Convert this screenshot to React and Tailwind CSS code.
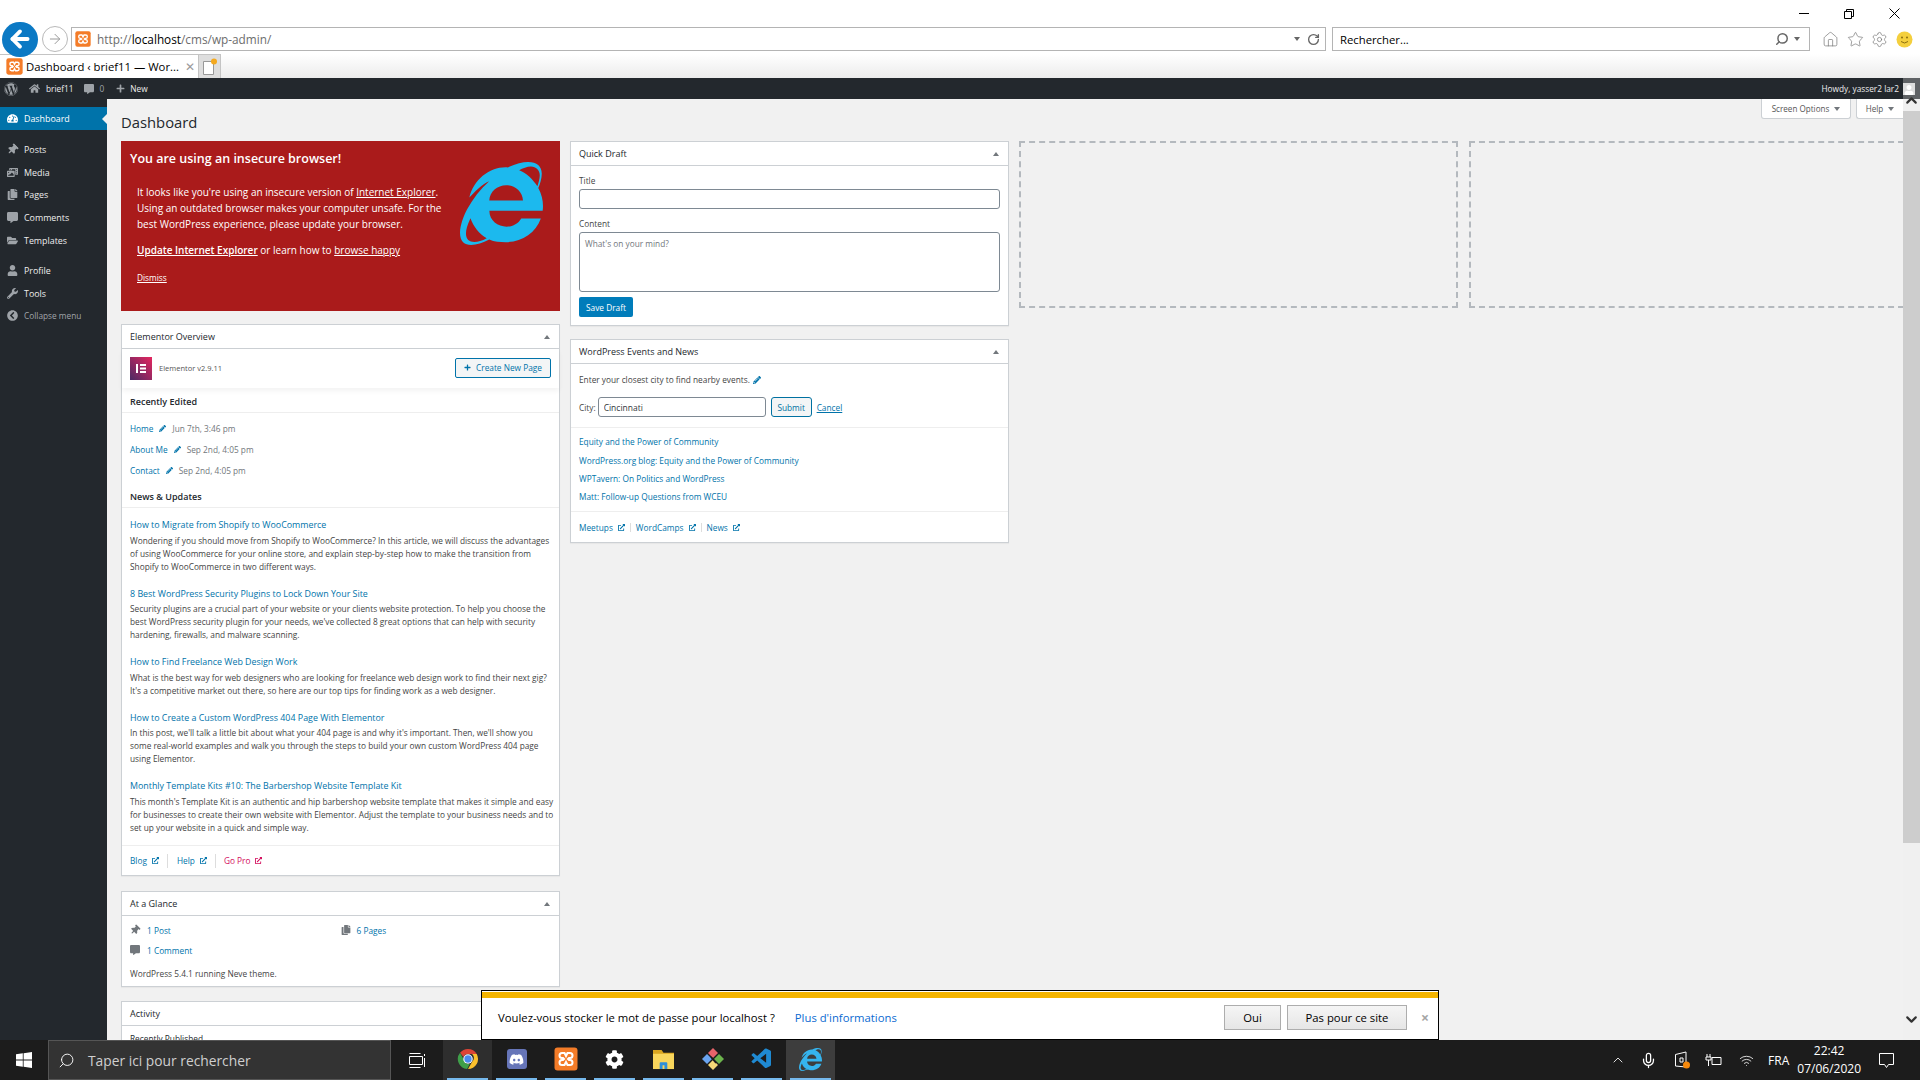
import {
  ArrowLeft,
  ArrowRight,
  ChevronDown,
  ChevronUp,
  Home,
  Mic,
  RotateCw,
  Search,
  Settings,
  Star,
  Wifi,
} from "lucide-react";
import {
  FaChevronCircleLeft,
  FaCog,
  FaCommentAlt,
  FaCopy,
  FaDiscord,
  FaExternalLinkAlt,
  FaFolderOpen,
  FaHome,
  FaInternetExplorer,
  FaPencilAlt,
  FaPhotoVideo,
  FaPlus,
  FaTachometerAlt,
  FaThumbtack,
  FaUser,
  FaWordpress,
  FaWrench,
} from "react-icons/fa";
import { VscVscode } from "react-icons/vsc";

const Xampp = ({ size = 16 }) => (
  <svg width={size} height={size} viewBox="0 0 24 24" className="shrink-0">
    <rect x="0.5" y="0.5" width="23" height="23" rx="3" fill="#f47c28" />
    <path
      d="M8 6h2.5L12 9l1.500-3H16a2.500 2.500 0 0 1 0 5h-1l-1 1 1 1h1a2.500 2.500 0 0 1 0 5h-2.500L12 15l-1.500 3H8a2.500 2.500 0 0 1 0-5h1l1-1-1-1H8a2.500 2.500 0 0 1 0-5z"
      fill="none"
      stroke="#fff"
      strokeWidth="2"
    />
  </svg>
);

const ChromeIcon = () => (
  <svg width="22" height="22" viewBox="0 0 24 24">
    <path d="M12 1a11 11 0 0 1 9.500 5.500H12a5.500 5.500 0 0 0-5 3.200L3.300 5.200A11 11 0 0 1 12 1z" fill="#db4437" />
    <path d="M21.500 6.500A11 11 0 0 1 12 23l4.700-8.200A5.500 5.500 0 0 0 16.500 6.500z" fill="#fbc02d" />
    <path d="M3.300 5.200 8 13.500a5.500 5.500 0 0 0 6 3.800L11 23A11 11 0 0 1 3.300 5.200z" fill="#3f9f4a" />
    <circle cx="12" cy="12" r="5.200" fill="#fff" />
    <circle cx="12" cy="12" r="4" fill="#4a8bf0" />
  </svg>
);

const FolderIcon = () => (
  <svg width="23" height="21" viewBox="0 0 24 22">
    <path d="M1 1h9l2 3h11v4H1z" fill="#d9a520" />
    <rect x="1" y="5" width="22" height="16" fill="#f9d65c" />
    <path d="M8 21v-6a1 1 0 0 1 1-1h6a1 1 0 0 1 1 1v6h-3v-4h-2v4z" fill="#2f8fd8" />
  </svg>
);

const GitIcon = () => (
  <svg width="24" height="24" viewBox="0 0 24 24">
    <path d="M12 1l5 5-5 5-5-5z" fill="#e8646a" />
    <path d="M18 7l5 5-5 5-5-5z" fill="#6cb44c" />
    <path d="M12 13l5 5-5 5-5-5z" fill="#f5d978" />
    <path d="M6 7l5 5-5 5-5-5z" fill="#6aa5f0" />
    <path d="M10 10l5 6" stroke="#1b1b1b" strokeWidth="1.500" />
  </svg>
);

const ElementorLogo = () => (
  <svg width="22" height="23" viewBox="0 0 22 23">
    <defs>
      <linearGradient id="elementor" x1="1" y1="0" x2="0" y2="1">
        <stop offset="0" stopColor="#e5265f" />
        <stop offset="1" stopColor="#4a2a64" />
      </linearGradient>
    </defs>
    <rect width="22" height="23" fill="url(#elementor)" />
    <rect x="6" y="7" width="2" height="9" fill="#fff" />
    <rect x="10" y="7" width="6" height="2" fill="#fff" />
    <rect x="10" y="10.500" width="6" height="2" fill="#fff" />
    <rect x="10" y="14" width="6" height="2" fill="#fff" />
  </svg>
);

const Panel = ({ title, children, className = "" }) => (
  <section className={`border border-[#ccd0d4] bg-white shadow-[0_1px_1px_rgba(0,0,0,0.04)] ${className}`}>
    <header className="flex h-[24px] items-center justify-between border-b border-[#ccd0d4] pl-[8px] pr-[9px]">
      <h2 className="text-[9px] font-medium text-[#23282d]">{title}</h2>
      <span className="h-0 w-0 border-x-[3px] border-b-[4px] border-x-transparent border-b-[#72777c]" />
    </header>
    {children}
  </section>
);

const External = ({ className = "text-[#0073aa]" }) => (
  <FaExternalLinkAlt size={7} className={`ml-[5px] ${className}`} />
);

const menu = [
  { label: "Posts", icon: FaThumbtack, tilt: true },
  { label: "Media", icon: FaPhotoVideo },
  { label: "Pages", icon: FaCopy },
  { label: "Comments", icon: FaCommentAlt },
  { label: "Templates", icon: FaFolderOpen },
];

const news = [
  {
    title: "How to Migrate from Shopify to WooCommerce",
    lines: [
      "Wondering if you should move from Shopify to WooCommerce? In this article, we will discuss the advantages",
      "of using WooCommerce for your online store, and explain step-by-step how to make the transition from",
      "Shopify to WooCommerce in two different ways.",
    ],
  },
  {
    title: "8 Best WordPress Security Plugins to Lock Down Your Site",
    lines: [
      "Security plugins are a crucial part of your website or your clients website protection. To help you choose the",
      "best WordPress security plugin for your needs, we've collected 8 great options that can help with security",
      "hardening, firewalls, and malware scanning.",
    ],
  },
  {
    title: "How to Find Freelance Web Design Work",
    lines: [
      "What is the best way for web designers who are looking for freelance web design work to find their next gig?",
      "It's a competitive market out there, so here are our top tips for finding work as a web designer.",
    ],
  },
  {
    title: "How to Create a Custom WordPress 404 Page With Elementor",
    lines: [
      "In this post, we'll talk a little bit about what your 404 page is and why it's important. Then, we'll show you",
      "some real-world examples and walk you through the steps to build your own custom WordPress 404 page",
      "using Elementor.",
    ],
  },
  {
    title: "Monthly Template Kits #10: The Barbershop Website Template Kit",
    lines: [
      "This month's Template Kit is an authentic and hip barbershop website template that makes it simple and easy",
      "for businesses to create their own website with Elementor. Adjust the template to your business needs and to",
      "set up your website in a quick and simple way.",
    ],
  },
];

const recent = [
  { name: "Home", date: "Jun 7th, 3:46 pm" },
  { name: "About Me", date: "Sep 2nd, 4:05 pm" },
  { name: "Contact", date: "Sep 2nd, 4:05 pm" },
];

const BrowserChrome = () => (
  <div className="h-[78px] shrink-0 bg-white">
    {/* window buttons */}
    <div className="flex h-[27px] items-center justify-end gap-[35px] pr-[20px]">
      <span className="h-px w-[10px] bg-black" />
      <svg width="10" height="10" viewBox="0 0 10 10" fill="none" stroke="#000">
        <path d="M.5 2.500h7v7h-7zM2.500 2.500v-2h7v7h-2" />
      </svg>
      <svg width="11" height="11" viewBox="0 0 11 11" stroke="#000">
        <path d="M.5.500l10 10M10.500.500l-10 10" />
      </svg>
    </div>

    {/* address row */}
    <div className="flex h-[24px] items-center pl-[2px]">
      <div className="z-10 flex h-[35px] w-[36px] shrink-0 items-center justify-center rounded-full bg-[#0b79c4]">
        <ArrowLeft size={26} strokeWidth={3.5} className="text-white" />
      </div>
      <div className="ml-[4px] flex h-[26px] w-[26px] shrink-0 items-center justify-center rounded-full border border-[#b9b9b9]">
        <ArrowRight size={16} strokeWidth={1.5} className="text-[#9a9a9a]" />
      </div>
      <div className="ml-[3px] flex h-[24px] w-[1255px] shrink-0 items-center border border-[#b4b4b4] pl-[3px] pr-[5px]">
        <Xampp size={16} />
        <span className="ml-[6px] text-[11.800px] text-[#6d6d6d]">
          http://<span className="text-black">localhost</span>/cms/wp-admin/
        </span>
        <span className="ml-auto h-0 w-0 border-x-[3.500px] border-t-[4px] border-x-transparent border-t-[#666]" />
        <RotateCw size={13} strokeWidth={2.5} className="ml-[7px] text-[#666]" />
      </div>
      <div className="ml-[6px] flex h-[24px] w-[478px] shrink-0 items-center border border-[#b4b4b4] pl-[7px] pr-[9px]">
        <span className="text-[11.300px] text-black">Rechercher...</span>
        <Search size={14} strokeWidth={2.500} className="ml-auto -scale-x-100 text-[#666]" />
        <span className="ml-[5px] h-0 w-0 border-x-[3.500px] border-t-[4px] border-x-transparent border-t-[#666]" />
      </div>
      <div className="ml-[12px] flex items-center gap-[7.500px]">
        <Home size={17} strokeWidth={1} className="text-[#777]" />
        <Star size={17} strokeWidth={1} className="text-[#777]" />
        <Settings size={17} strokeWidth={1} className="text-[#777]" />
        <svg width="17" height="17" viewBox="0 0 17 17">
          <circle cx="8.500" cy="8.500" r="8" fill="#f4cf3d" />
          <circle cx="6" cy="6.500" r="1" fill="#8a6d10" />
          <circle cx="11" cy="6.500" r="1" fill="#8a6d10" />
          <path d="M5 10.500q3.500 3 7 0" fill="none" stroke="#8a6d10" />
        </svg>
      </div>
    </div>

    {/* tab row */}
    <div className="mt-[3px] flex h-[24px] bg-gradient-to-b from-white to-[#ececec]">
      <div className="flex w-[199px] shrink-0 items-center border-r border-t border-[#c4c4c4] bg-white pl-[6px]">
        <Xampp size={17} />
        <span className="ml-[3px] whitespace-nowrap text-[11.300px] text-black">Dashboard ‹ brief11 — Wor...</span>
        <span className="ml-[6px] text-[12px] leading-none text-[#9a9a9a]">✕</span>
      </div>
      <div className="flex w-[22px] shrink-0 items-center justify-center border-r border-t border-[#c4c4c4] bg-[#dedede]">
        <svg width="15" height="17" viewBox="0 0 15 17">
          <path d="M1.500 3.500h10v13h-10z" fill="#fff" stroke="#999" />
          <circle cx="12" cy="3.500" r="3" fill="#f4a91f" />
        </svg>
      </div>
    </div>
  </div>
);

const AdminBar = () => (
  <div className="flex h-[21px] items-center bg-[#23282d] text-[8.300px] text-[#eee]">
    <FaWordpress size={14} className="ml-[4px] text-[#9ea3a8]" />
    <FaHome size={11} className="ml-[11px] text-[#9ea3a8]" />
    <span className="ml-[6px]">brief11</span>
    <FaCommentAlt size={10} className="ml-[10px] text-[#9ea3a8]" />
    <span className="ml-[6px] text-[#9ea3a8]">0</span>
    <FaPlus size={9} className="ml-[12px] text-[#9ea3a8]" />
    <span className="ml-[5px]">New</span>
    <span className="ml-auto pr-[4px] text-[#eee]">Howdy, yasser2 lar2</span>
  </div>
);

const Sidebar = () => (
  <nav className="w-[107px] shrink-0 bg-[#23282d] pt-[8px] text-[8.900px] text-[#eee]">
    <div className="flex h-[23px] items-center bg-[#0073aa] pl-[7px] text-white">
      <FaTachometerAlt size={11} />
      <span className="ml-[6px]">Dashboard</span>
      <span className="ml-auto h-0 w-0 border-y-[5px] border-r-[5px] border-y-transparent border-r-[#f1f1f1]" />
    </div>
    <div className="mt-[8px]">
      {menu.map(({ label, icon: Icon, tilt }) => (
        <div key={label} className="flex h-[22.800px] items-center pl-[7px]">
          <Icon size={11} className={tilt ? "rotate-45 text-[#9ea3a8]" : "text-[#9ea3a8]"} />
          <span className="ml-[6px]">{label}</span>
        </div>
      ))}
    </div>
    <div className="mt-[7px]">
      <div className="flex h-[22.800px] items-center pl-[7px]">
        <FaUser size={11} className="text-[#9ea3a8]" />
        <span className="ml-[6px]">Profile</span>
      </div>
      <div className="flex h-[22.800px] items-center pl-[7px]">
        <FaWrench size={11} className="text-[#9ea3a8]" />
        <span className="ml-[6px]">Tools</span>
      </div>
      <div className="flex h-[22.800px] items-center pl-[7px] text-[8.300px] text-[#a0a5aa]">
        <FaChevronCircleLeft size={11} className="text-[#9ea3a8]" />
        <span className="ml-[6px]">Collapse menu</span>
      </div>
    </div>
  </nav>
);

const InsecureBrowser = () => (
  <div className="mb-[13px] flex h-[170px] bg-[#aa1b1b] text-white">
    <div className="flex-1">
      <h3 className="mt-[10px] pl-[9px] text-[12.500px] font-semibold leading-[15px]">You are using an insecure browser!</h3>
      <div className="mt-[18px] pl-[16px] text-[10px] leading-[16px]">
        <p>
          It looks like you're using an insecure version of <u>Internet Explorer</u>.
        </p>
        <p>Using an outdated browser makes your computer unsafe. For the</p>
        <p>best WordPress experience, please update your browser.</p>
        <p className="mt-[10px]">
          <u className="font-semibold">Update Internet Explorer</u> or learn how to <u>browse happy</u>
        </p>
        <p className="mt-[12px] text-[8.300px]">
          <u>Dismiss</u>
        </p>
      </div>
    </div>
    <FaInternetExplorer size={83} className="mr-[17px] mt-[21px] shrink-0 text-[#1cb9ee]" />
  </div>
);

const ElementorOverview = () => (
  <Panel title="Elementor Overview" className="mb-[15px]">
    <div className="flex h-[39px] items-center px-[8px] shadow-[0_3px_5px_rgba(0,0,0,0.05)]">
      <ElementorLogo />
      <span className="ml-[7px] text-[7.500px] text-[#555]">Elementor v2.9.11</span>
      <button className="mb-[2px] ml-auto flex h-[20px] w-[96px] items-center justify-center rounded-[2px] border border-[#0073aa] bg-[#f3f5f6] text-[8.300px] text-[#0073aa]">
        <FaPlus size={7} className="mr-[5px]" />
        Create New Page
      </button>
    </div>
    <h3 className="flex h-[25px] items-end border-b border-[#eee] px-[8px] pb-[4px] text-[9px] font-semibold text-[#23282d]">Recently Edited</h3>
    <div className="px-[8px] pt-[5px]">
      {recent.map((item) => (
        <div key={item.name} className="flex h-[21px] items-center text-[#72777c]">
          <span className="text-[#0073aa]">{item.name}</span>
          <FaPencilAlt size={7} className="mx-[6px] text-[#0073aa]" />
          <span>{item.date}</span>
        </div>
      ))}
    </div>
    <h3 className="flex h-[27px] items-end border-b border-[#eee] px-[8px] pb-[4px] text-[9px] font-semibold text-[#23282d]">News &amp; Updates</h3>
    <div className="flex flex-col gap-[14px] whitespace-nowrap px-[8px] pb-[11.500px] pt-[10px]">
      {news.map((post) => (
        <article key={post.title}>
          <div className="text-[8.900px] text-[#0073aa]">{post.title}</div>
          <div className="mt-[2.500px] text-[#444]">
            {post.lines.map((line) => (
              <div key={line}>{line}</div>
            ))}
          </div>
        </article>
      ))}
    </div>
    <div className="flex h-[30px] items-center border-t border-[#eee] px-[8px] text-[#0073aa]">
      <span>Blog</span>
      <External />
      <span className="mx-[8.500px] h-[14px] w-px bg-[#ddd]" />
      <span>Help</span>
      <External />
      <span className="mx-[8px] h-[14px] w-px bg-[#ddd]" />
      <span className="text-[#d30c5c]">Go Pro</span>
      <External className="text-[#d30c5c]" />
    </div>
  </Panel>
);

const AtAGlance = () => (
  <Panel title="At a Glance" className="mb-[14px]">
    <div className="px-[8px] pb-[6px] pt-[4px] text-[#0073aa]">
      <div className="grid h-[20px] grid-cols-2 items-center">
        <div className="flex items-center">
          <FaThumbtack size={10} className="rotate-45 text-[#72777c]" />
          <span className="ml-[7px]">1 Post</span>
        </div>
        <div className="flex items-center">
          <FaCopy size={10} className="text-[#72777c]" />
          <span className="ml-[6px]">6 Pages</span>
        </div>
      </div>
      <div className="flex h-[20px] items-center">
        <FaCommentAlt size={10} className="text-[#72777c]" />
        <span className="ml-[7px]">1 Comment</span>
      </div>
      <p className="mt-[7px] text-[#444]">WordPress 5.4.1 running Neve theme.</p>
    </div>
  </Panel>
);

const QuickDraft = () => (
  <Panel title="Quick Draft" className="mb-[13px]">
    <div className="px-[8px] pb-[8px] pt-[8px] text-[#444]">
      <label className="block">Title</label>
      <input className="mt-[2px] block h-[20px] w-full rounded-[3px] border border-[#7e8993] bg-white" />
      <label className="mt-[8px] block">Content</label>
      <textarea
        placeholder="What's on your mind?"
        className="mt-[2px] block h-[60px] w-full resize-none rounded-[3px] border border-[#7e8993] bg-white px-[5px] py-[4px] text-[8.300px] placeholder:text-[#72777c]"
      />
      <button className="mt-[5px] block h-[20px] w-[54px] rounded-[2px] bg-[#007cba] text-[8.300px] text-white">Save Draft</button>
    </div>
  </Panel>
);

const EventsNews = () => (
  <Panel title="WordPress Events and News">
    <div className="border-b border-[#eee] px-[8px] pb-[10px] pt-[9px] text-[#444]">
      <div className="flex h-[13px] items-center">
        Enter your closest city to find nearby events.
        <FaPencilAlt size={8} className="ml-[3px] text-[#0073aa]" />
      </div>
      <div className="mt-[11px] flex items-center">
        <span>City:</span>
        <input
          defaultValue="Cincinnati"
          className="ml-[2px] h-[20px] w-[168px] rounded-[3px] border border-[#7e8993] bg-white px-[5px] text-[8.500px] text-[#32373c]"
        />
        <button className="ml-[5px] h-[20px] w-[41px] rounded-[3px] border border-[#0071a1] bg-[#f3f5f6] text-[8.300px] text-[#0071a1]">Submit</button>
        <u className="ml-[5px] text-[#0073aa]">Cancel</u>
      </div>
    </div>
    <div className="flex flex-col gap-[5px] border-b border-[#eee] px-[8px] pb-[8px] pt-[7px] text-[#0073aa]">
      <div className="mb-[1px]">Equity and the Power of Community</div>
      <div>WordPress.org blog: Equity and the Power of Community</div>
      <div>WPTavern: On Politics and WordPress</div>
      <div>Matt: Follow-up Questions from WCEU</div>
    </div>
    <div className="flex h-[30px] items-center px-[8px] text-[#0073aa]">
      <span>Meetups</span>
      <External />
      <span className="mx-[5px] h-[9px] w-px bg-[#ddd]" />
      <span>WordCamps</span>
      <External />
      <span className="mx-[5px] h-[9px] w-px bg-[#ddd]" />
      <span>News</span>
      <External />
    </div>
  </Panel>
);

const Scrollbar = () => (
  <div className="flex w-[17px] shrink-0 flex-col bg-[#f0f0f0]">
    <div className="flex h-[21px] shrink-0 justify-start bg-[#5f6265] pt-[5px]">
      <div className="flex h-[12px] w-[12px] items-end justify-center overflow-hidden bg-[#ddd]">
        <FaUser size={10} className="text-white" />
      </div>
    </div>
    <div className="flex h-[12px] shrink-0 items-center justify-center">
      <ChevronUp size={17} strokeWidth={3} className="-translate-y-[5px] text-[#333]" />
    </div>
    <div className="h-[732px] shrink-0 bg-[#cdcdcd]" />
    <div className="mt-auto flex h-[29px] shrink-0 items-start justify-center">
      <ChevronDown size={17} strokeWidth={3} className="text-[#333]" />
    </div>
  </div>
);

const PasswordPrompt = () => (
  <div className="absolute bottom-0 left-[481px] h-[50px] w-[958px] border border-black bg-white pt-[1px] font-['Open_Sans',sans-serif]">
    <div className="h-[6px] bg-[#f4b400]" />
    <div className="flex h-[39px] items-center pl-[16px] text-[11.300px] text-black">
      <span>Voulez-vous stocker le mot de passe pour localhost ?</span>
      <span className="ml-[20px] text-[#0b6ad1]">Plus d'informations</span>
      <button className="ml-auto h-[25px] w-[57px] border border-[#adadad] bg-gradient-to-b from-[#f5f5f5] to-[#e6e6e6]">Oui</button>
      <button className="ml-[6px] h-[25px] w-[120px] border border-[#adadad] bg-gradient-to-b from-[#f5f5f5] to-[#e6e6e6]">Pas pour ce site</button>
      <span className="ml-[14px] mr-[9px] text-[14px] font-bold leading-none text-[#a5a5a5]">×</span>
    </div>
  </div>
);

const apps = [
  { key: "chrome", node: <ChromeIcon />, active: true },
  { key: "discord", node: (
    <div className="flex h-[20px] w-[20px] items-center justify-center rounded-[3px] bg-[#6675b8]">
      <FaDiscord size={15} className="text-white" />
    </div>
  ) },
  { key: "xampp", node: <Xampp size={24} /> },
  { key: "settings", node: <FaCog size={19} className="text-white" /> },
  { key: "files", node: <FolderIcon /> },
  { key: "git", node: <GitIcon /> },
  { key: "vscode", node: <VscVscode size={24} className="text-[#1f8ad2]" /> },
  { key: "ie", node: <FaInternetExplorer size={23} className="text-[#35b4ee]" />, current: true },
];

const Taskbar = () => (
  <div className="flex h-[40px] shrink-0 items-stretch bg-[#1c1c1c] text-white">
    <div className="flex w-[48px] shrink-0 items-center justify-center">
      <svg width="16" height="16" viewBox="0 0 16 16" fill="#fff">
        <path d="M0 2.300 6.800 1.300v6.300H0zM7.600 1.200 16 0v7.600H7.600zM0 8.400h6.800v6.300L0 13.700zM7.600 8.400H16V16l-8.400-1.200z" />
      </svg>
    </div>
    <div className="flex w-[343px] shrink-0 items-center border border-[#555] bg-[#333] pl-[9px]">
      <Search size={17} strokeWidth={1.300} className="-scale-x-100 text-white" />
      <span className="ml-[13px] text-[13.800px] text-[#cfcfcf]">Taper ici pour rechercher</span>
    </div>
    <div className="flex w-[52px] shrink-0 items-center justify-center">
      <svg width="17" height="17" viewBox="0 0 17 17" fill="none" stroke="#fff">
        <path d="M.5 1.500h11M.5 4.500h13v8H.5zM.5 15.500h11M15.500 2v2M15.500 6v9" />
      </svg>
    </div>
    {apps.map((app) => (
      <div
        key={app.key}
        className={`flex w-[49px] shrink-0 flex-col ${app.active ? "bg-[#2e2e2e]" : ""} ${app.current ? "bg-[#3d3d3d]" : ""}`}
      >
        <div className="flex flex-1 items-center justify-center">{app.node}</div>
        <div className="mx-[4px] h-[2px] bg-[#76b9ed]" />
      </div>
    ))}
    <div className="ml-auto flex items-center pr-[25px]">
      <ChevronUp size={16} strokeWidth={1.300} />
      <Mic size={17} strokeWidth={1.800} className="ml-[14px]" />
      <svg width="17" height="18" viewBox="0 0 17 18" fill="none" stroke="#fff" className="ml-[17px]">
        <path d="M1.500 3.500 12 1v15l-10.500-1zM6 7h3v4H6z" />
        <circle cx="12.500" cy="14" r="3.500" fill="#f7890c" stroke="none" />
      </svg>
      <svg width="17" height="15" viewBox="0 0 17 15" fill="none" stroke="#fff" className="ml-[14px]">
        <path d="M7 4.500h9v7H7zM2 1v3M5 1v3M1 4h5v3H1zM3.500 7v6" />
      </svg>
      <Wifi size={15} strokeWidth={1.300} className="ml-[17.500px]" />
      <span className="ml-[14px] text-[12px]">FRA</span>
      <div className="ml-[8px] flex flex-col items-center text-[12px] leading-[18px]">
        <span>22:42</span>
        <span>07/06/2020</span>
      </div>
      <svg width="17" height="17" viewBox="0 0 17 17" fill="none" stroke="#fff" className="ml-[17px]">
        <path d="M1.500 1.500h14v11h-5l-2 3-2-3h-5z" />
      </svg>
    </div>
  </div>
);

export default function App() {
  return (
    <div className="relative flex h-screen w-full flex-col overflow-hidden bg-white font-['Open_Sans',sans-serif] text-[8.300px] leading-[13px]">
      <BrowserChrome />
      <div className="flex min-h-0 flex-1">
        <div className="flex min-w-0 flex-1 flex-col">
          <AdminBar />
          <div className="flex min-h-0 flex-1">
            <Sidebar />
            <main className="min-w-0 flex-1 overflow-hidden bg-[#f1f1f1] pl-[14px]">
              <div className="flex h-[42px] items-start justify-between">
                <h1 className="mt-[15px] text-[14.800px] leading-[17px] text-[#23282d]">Dashboard</h1>
                <div className="flex gap-[5px] text-[8.100px] text-[#555]">
                  <div className="flex h-[20px] w-[90px] items-center justify-center gap-[5px] rounded-b-[3px] border border-t-0 border-[#ccd0d4] bg-white">
                    Screen Options
                    <span className="h-0 w-0 border-x-[3px] border-t-[4px] border-x-transparent border-t-[#72777c]" />
                  </div>
                  <div className="flex h-[20px] w-[47px] items-center justify-center gap-[5px] rounded-bl-[3px] border border-r-0 border-t-0 border-[#ccd0d4] bg-white">
                    Help
                    <span className="h-0 w-0 border-x-[3px] border-t-[4px] border-x-transparent border-t-[#72777c]" />
                  </div>
                </div>
              </div>
              <div className="flex gap-[10px]">
                <div className="w-[439px] shrink-0">
                  <InsecureBrowser />
                  <ElementorOverview />
                  <AtAGlance />
                  <Panel title="Activity">
                    <div className="px-[8px] pt-[6px] text-[#23282d]">Recently Published</div>
                  </Panel>
                </div>
                <div className="w-[439px] shrink-0">
                  <QuickDraft />
                  <EventsNews />
                </div>
                <div className="h-[167px] w-[439px] shrink-0 border-2 border-dashed border-[#b4b9be]" />
                <div className="ml-[1px] h-[167px] w-[445px] shrink-0 border-2 border-dashed border-[#b4b9be]" />
              </div>
            </main>
          </div>
        </div>
        <Scrollbar />
      </div>
      <Taskbar />
      <div className="absolute bottom-[40px] left-0 right-0">
        <PasswordPrompt />
      </div>
    </div>
  );
}
